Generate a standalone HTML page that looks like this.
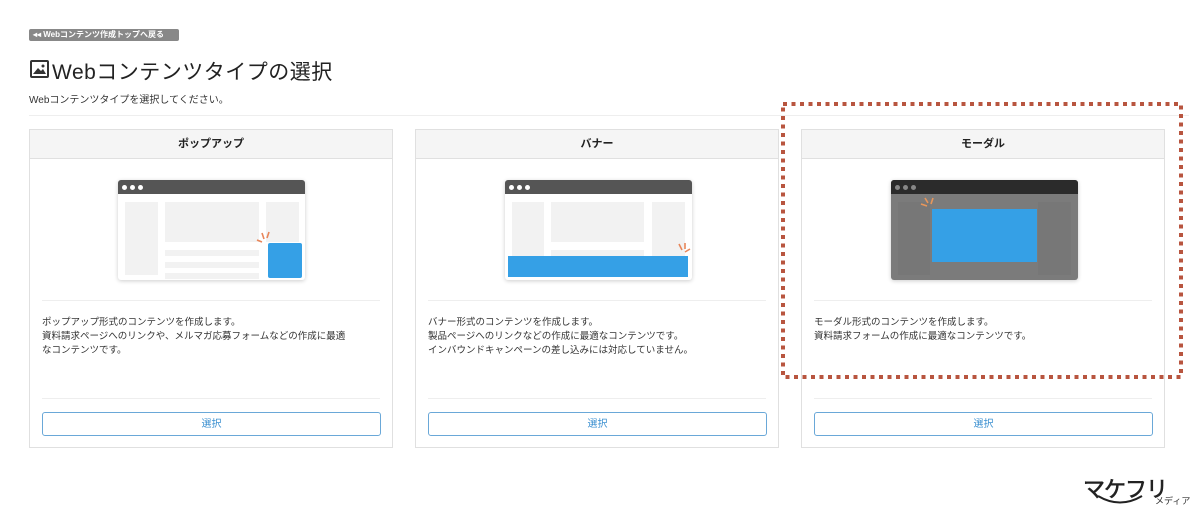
<!DOCTYPE html>
<html><head><meta charset="utf-8"><style>
*{box-sizing:border-box;margin:0;padding:0}
body{width:1200px;height:519px;background:#fff;font-family:"Liberation Sans","Noto Sans CJK JP",sans-serif;color:#333;position:relative;overflow:hidden}
.back{position:absolute;left:29px;top:29px;width:150px;height:12px;background:#888;color:#fff;font-size:8px;font-weight:bold;line-height:12px;padding-left:4px;border-radius:2px}
h1{position:absolute;left:52px;top:56px;font-size:21px;font-weight:normal;color:#222;letter-spacing:0.5px}
.ico{position:absolute;left:30px;top:60px;width:19px;height:18px;border:2px solid #333;border-radius:2px}
.sub{position:absolute;left:29px;top:91px;font-size:10px;color:#333}
.hr{position:absolute;left:29px;top:115px;width:1160px;height:1px;background:#eee}
.card{position:absolute;top:129px;width:364px;height:319px;border:1px solid #e0e0e0;background:#fff}
.hd{height:29px;background:#f5f5f5;border-bottom:1px solid #e0e0e0;text-align:center;font-size:11px;font-weight:bold;line-height:29px;color:#222}
.fr{position:absolute;left:88px;top:50px;width:187px;height:100px;background:#fff;box-shadow:0 1px 4px rgba(0,0,0,.2);border-radius:3px;overflow:hidden}
.tb{position:absolute;left:0;top:0;width:100%;height:14px;background:#555}
.dot{position:absolute;top:5px;width:5px;height:5px;border-radius:50%;background:#fff}
.b{position:absolute;background:#f2f2f2}
.sep{position:absolute;left:12px;width:338px;height:1px;background:#eee}
.txt{position:absolute;left:12px;top:186px;font-size:9.5px;line-height:14px;color:#333}
.btn{position:absolute;left:12px;top:282px;width:339px;height:24px;border:1px solid #6aa8d8;border-radius:3px;text-align:center;line-height:24px;font-size:10px;color:#3a8fd0}
</style></head><body>
<div class="back">◂◂ Webコンテンツ作成トップへ戻る</div>
<div class="ico"><svg width="15" height="14" style="position:absolute;left:0;top:0"><path d="M1 12 L6 6 L9 9 L11 7 L14 12Z" fill="#333"/><circle cx="11" cy="4" r="1.5" fill="#333"/></svg></div>
<h1>Webコンテンツタイプの選択</h1>
<div class="sub">Webコンテンツタイプを選択してください。</div>
<div class="hr"></div>

<div class="card" style="left:29px">
<div class="hd">ポップアップ</div>
<div class="fr"><div class="tb"><div class="dot" style="left:4px"></div><div class="dot" style="left:12px"></div><div class="dot" style="left:20px"></div></div>
<div class="b" style="left:7px;top:22px;width:33px;height:73px"></div>
<div class="b" style="left:47px;top:22px;width:94px;height:40px"></div>
<div class="b" style="left:47px;top:70px;width:94px;height:6px"></div>
<div class="b" style="left:47px;top:82px;width:94px;height:6px"></div>
<div class="b" style="left:47px;top:93px;width:94px;height:6px"></div>
<div class="b" style="left:148px;top:22px;width:33px;height:40px"></div>
<div style="position:absolute;left:150px;top:63px;width:34px;height:35px;background:#35a0e6;border-radius:2px"></div>
<svg style="position:absolute;left:137px;top:50px" width="16" height="14"><path d="M2 10 L7 12 M7 3 L9 9 M14 2 L12 8" stroke="#e8865a" stroke-width="1.6" fill="none"/></svg>
</div>
<div class="sep" style="top:170px"></div>
<div class="txt">ポップアップ形式のコンテンツを作成します。<br>資料請求ページへのリンクや、メルマガ応募フォームなどの作成に最適<br>なコンテンツです。</div>
<div class="sep" style="top:268px"></div>
<div class="btn">選択</div>
</div>

<div class="card" style="left:415px">
<div class="hd">バナー</div>
<div class="fr" style="left:89px"><div class="tb"><div class="dot" style="left:4px"></div><div class="dot" style="left:12px"></div><div class="dot" style="left:20px"></div></div>
<div class="b" style="left:7px;top:22px;width:32px;height:73px"></div>
<div class="b" style="left:46px;top:22px;width:93px;height:40px"></div>
<div class="b" style="left:46px;top:70px;width:93px;height:6px"></div>
<div class="b" style="left:147px;top:22px;width:33px;height:73px"></div>
<div style="position:absolute;left:3px;top:76px;width:180px;height:21px;background:#35a0e6"></div>
<svg style="position:absolute;left:172px;top:62px" width="15" height="14"><path d="M2 2 L5 8 M8 1 L8 7 M13 7 L8 10" stroke="#e8865a" stroke-width="1.6" fill="none"/></svg>
</div>
<div class="sep" style="top:170px"></div>
<div class="txt">バナー形式のコンテンツを作成します。<br>製品ページへのリンクなどの作成に最適なコンテンツです。<br>インバウンドキャンペーンの差し込みには対応していません。</div>
<div class="sep" style="top:268px"></div>
<div class="btn">選択</div>
</div>

<div class="card" style="left:801px">
<div class="hd">モーダル</div>
<div class="fr" style="left:89px;background:#7b7b7b"><div class="tb" style="background:#2b2b2b"><div class="dot" style="left:4px;background:#888"></div><div class="dot" style="left:12px;background:#888"></div><div class="dot" style="left:20px;background:#888"></div></div>
<div class="b" style="left:7px;top:22px;width:32px;height:73px;background:#777"></div>
<div class="b" style="left:147px;top:22px;width:33px;height:73px;background:#777"></div>
<div style="position:absolute;left:41px;top:29px;width:105px;height:53px;background:#35a0e6"></div>
<svg style="position:absolute;left:28px;top:16px" width="16" height="14"><path d="M2 8 L8 10 M6 2 L9 7 M14 2 L12 8" stroke="#e8965a" stroke-width="1.6" fill="none"/></svg>
</div>
<div class="sep" style="top:170px"></div>
<div class="txt">モーダル形式のコンテンツを作成します。<br>資料請求フォームの作成に最適なコンテンツです。</div>
<div class="sep" style="top:268px"></div>
<div class="btn">選択</div>
</div>

<svg style="position:absolute;left:779px;top:100px" width="406" height="281"><rect x="4" y="4" width="398" height="273" fill="none" stroke="#b8553f" stroke-width="4" stroke-dasharray="4 4.5"/></svg>
<div style="position:absolute;left:1083px;top:472px;font-size:22px;color:#222;letter-spacing:-1px;-webkit-text-stroke:0.6px #222">マケフリ</div>
<svg style="position:absolute;left:1095px;top:493px" width="50" height="14"><path d="M3 3 Q25 16 47 3" stroke="#222" stroke-width="2" fill="none"/></svg>
<div style="position:absolute;left:1155px;top:494px;font-size:9px;color:#333">メディア</div>
</body></html>
